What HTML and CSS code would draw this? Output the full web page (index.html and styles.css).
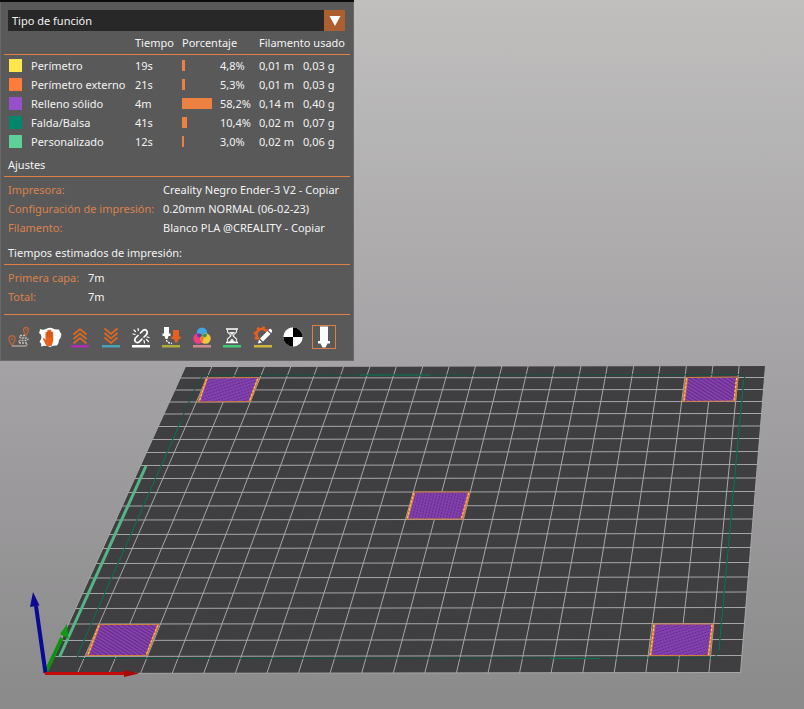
FILE: index.html
```html
<!DOCTYPE html>
<html lang="es">
<head>
<meta charset="utf-8">
<meta name="viewport" content="width=device-width, initial-scale=1">
<title>Vista previa</title>
<link rel="stylesheet" href="styles.css">
</head>
<body>
<main class="viewer">
  <svg class="scene" viewBox="0 0 804 709" preserveAspectRatio="xMinYMin meet" role="img" aria-label="Cama de impresión">
    <defs>
      <pattern id="fill-a" width="4" height="3" patternUnits="userSpaceOnUse" patternTransform="rotate(32)">
        <rect width="4" height="3" fill="#8740b0"/><rect width="4" height="1" fill="#5e2d80"/>
      </pattern>
      <pattern id="fill-b" width="3" height="3" patternUnits="userSpaceOnUse" patternTransform="rotate(-18)">
        <rect width="3" height="3" fill="#8440b0"/><rect width="2" height="1" fill="#5f2f85"/>
      </pattern>
      <pattern id="fill-c" width="3" height="3" patternUnits="userSpaceOnUse" patternTransform="rotate(14)">
        <rect width="3" height="3" fill="#833fae"/><rect width="1" height="2" fill="#5c2d80"/>
      </pattern>
    </defs>
    <path class="bed" d="M185.5 366.5L765.5 365.5L740.5 672.5L46 673.5Z"/>
    <!-- rows -->
    <path class="grid" d="M185.5 366.5L765.5 365.5M180.3 378L764.5 377.5M174.8 390L763.5 389.5M169.4 402L762.6 401.5M163.9 414L761.6 413.5M158.2 426.5L760.6 426M152.3 439.5L759.6 438.5M146.4 452.5L758.5 451.5M140.5 465.5L757.4 464.5M134.6 478.5L756.3 478M128.2 492.5L755.2 491.5M122.1 506L754.1 505.5M115.7 520L753 519M109.1 534.5L751.8 533.5M102.8 548.5L750.7 547.5M96 563.5L749.5 562.5M89.4 578L748.3 577M82.4 593.5L747.1 592M75.5 608.5L745.8 607.5M68.5 624L744.5 623.5M61 640.5L743.2 639.5M53.7 656.5L741.9 655.5M46 673.5L740.5 672.5"/>
    <!-- columns -->
    <path class="grid" d="M185.5 366.5L46 673.5M211.9 366.5L77.6 673M238.2 366.5L109.1 673M264.6 366.5L140.7 673M290.9 366.5L172.3 673M317.3 366.5L203.8 673M343.7 366.5L235.4 673M370 366.5L267 673M396.4 366.5L298.5 673M422.8 366.5L330.1 673M449.1 366.5L361.7 673M475.5 366L393.3 673M501.9 366L424.8 673M528.2 366L456.4 673M554.6 366L488 673M581 366L519.5 673M607.3 366L551.1 673M633.7 366L582.7 673M660 366L614.2 673M686.4 366L645.8 673M712.8 366L677.4 673M739.1 366L708.9 673M765.5 365.5L740.5 672.5"/>
    <path class="skirt" d="M203 375.5L740 374.5L744.5 377L743.5 385L718.5 653L714 658L80 658.500L77 656L197 384Z"/>
    <path class="skirt skirt-bright" d="M181 421L77 656M743.500 380L719 650M360 375L430 375M550 658.500L600 658.500"/>
    <path class="purge" d="M146 466L59.500 657"/>
    <g class="patch">
      <path fill="url(#fill-b)" d="M206 378L259 377.500L250.500 401.500L198 402Z"/>
      <path fill="url(#fill-a)" d="M685.500 377.500L738 377L735.500 401L683 401.500Z"/>
      <path fill="url(#fill-c)" d="M413.500 492L470 492L463 519L406.500 519Z"/>
      <path fill="url(#fill-a)" d="M98.500 624.500L159 624.500L147 655.500L86.500 655.500Z"/>
      <path fill="url(#fill-b)" d="M653.500 624L713.500 624L709.500 655.500L649.500 655.500Z"/>
    </g>
    <path class="patch-edge" d="M207 378.500L199 401.500M258 378.500L249.500 401.500M687 378L684 401M737 378L734.500 401M414.500 492.500L407.500 518.500M469 492.500L462 518.500M99.500 625L88 655M158 625L146.500 655M654.500 624.500L650.500 655M712.500 624.500L708.500 655"/>
    <path class="patch-side" d="M206.500 379L199.500 401M257.500 379L249.500 401M686.500 378.500L684 401M736.500 378L734 400M413.500 493L407.500 518M468.500 493L461.500 518M98.500 625.500L88 655M157.500 625.500L146 655M654 625L650.500 655M712 625L708.500 655"/>
    <path stroke="#119111" stroke-width="4" d="M46 672L62 638"/>
    <path fill="#119a11" d="M67 624L60 634L68.500 639Z"/>
    <path stroke="#0a0a96" stroke-width="4" d="M45.500 673L36 606"/>
    <path fill="#0a0a96" d="M33 592L30 607L39.500 605.500Z"/>
    <path stroke="#c50808" stroke-width="3" d="M45 673.500H125"/>
    <path fill="#a80808" d="M124 670L139 673.500L124 677Z"/>
  </svg>

  <section class="panel" aria-label="Leyenda">
    <div class="picker">
      <select class="picker-select" aria-label="Tipo de vista"><option>Tipo de función</option></select>
      <span class="picker-arrow"><svg width="12" height="10" viewBox="0 0 12 10"><path fill="#fff" d="M.5 0H11.500L6 10Z"/></svg></span>
    </div>

    <table class="features">
      <colgroup><col class="c-swatch"><col class="c-name"><col class="c-time"><col class="c-bar"><col class="c-pct"><col class="c-len"><col></colgroup>
      <thead>
        <tr><th colspan="2"></th><th>Tiempo</th><th colspan="2">Porcentaje</th><th colspan="2">Filamento usado</th></tr>
      </thead>
      <tbody>
        <tr><td><i class="swatch yellow"></i></td><td>Perímetro</td><td>19s</td><td><i class="bar" style="width:3px"></i></td><td>4,8%</td><td>0,01 m</td><td>0,03 g</td></tr>
        <tr><td><i class="swatch orange"></i></td><td>Perímetro externo</td><td>21s</td><td><i class="bar" style="width:3px"></i></td><td>5,3%</td><td>0,01 m</td><td>0,03 g</td></tr>
        <tr><td><i class="swatch purple"></i></td><td>Relleno sólido</td><td>4m</td><td><i class="bar" style="width:30px"></i></td><td>58,2%</td><td>0,14 m</td><td>0,40 g</td></tr>
        <tr><td><i class="swatch teal"></i></td><td>Falda/Balsa</td><td>41s</td><td><i class="bar" style="width:5px"></i></td><td>10,4%</td><td>0,02 m</td><td>0,07 g</td></tr>
        <tr><td><i class="swatch mint"></i></td><td>Personalizado</td><td>12s</td><td><i class="bar" style="width:2px"></i></td><td>3,0%</td><td>0,02 m</td><td>0,06 g</td></tr>
      </tbody>
    </table>

    <h2 class="title">Ajustes</h2>
    <dl class="facts facts-wide">
      <dt>Impresora:</dt><dd>Creality Negro Ender-3 V2 - Copiar</dd>
      <dt>Configuración de impresión:</dt><dd>0.20mm NORMAL (06-02-23)</dd>
      <dt>Filamento:</dt><dd>Blanco PLA @CREALITY - Copiar</dd>
    </dl>

    <h2 class="title title-spaced">Tiempos estimados de impresión:</h2>
    <dl class="facts facts-narrow">
      <dt>Primera capa:</dt><dd>7m</dd>
      <dt>Total:</dt><dd>7m</dd>
    </dl>

    <div class="tools">
      <button class="tool" aria-label="Recorrido"><svg viewBox="0 0 24 24" fill="none">
        <path stroke="#b5663a" stroke-width="1.400" d="M5 20.500C3.500 17.500 2 16 2 13.800a3 3 0 0 1 6 0C8 16 6.500 17.500 5 20.500ZM19 10.500C17.800 8 16.500 6.800 16.500 5a2.500 2.500 0 0 1 5 0C21.500 6.800 20.200 8 19 10.500Z"/>
        <circle cx="5" cy="13.800" r="1" fill="#b5663a"/><circle cx="19" cy="5" r=".8" fill="#b5663a"/>
        <path stroke="#c8c4c0" stroke-width="1.300" stroke-dasharray="2 1" d="M18 10.500H13.500Q11.500 11 13.500 13H20Q22 14 20 15.500H13Q10.500 16.500 13 18H20"/>
        <path stroke="#a8a09a" stroke-width="1.300" d="M5 21H18Q20 21 20 18.500"/></svg></button>
      <button class="tool" aria-label="Limpieza"><svg viewBox="0 0 24 24">
        <path fill="#fff" d="M2 4Q5 5.500 8 4Q11 2 14 3Q17 5 21 4.500Q21.500 7 23.500 9Q23 13 21 15Q21 18 19 20.500Q15 20 12 22Q8 20 3 21.500Q4 18 1.500 17Q3.500 14 3.500 12Q3.500 9 1 8Q2 6 2 4Z"/>
        <path fill="#e8601c" d="M8 20L5 14Q5 12.500 6.500 13.500L7.500 15V7.500Q8.500 6 9.300 7.500V5.500Q10.500 4 11.300 5.500V5Q12.500 4 13.300 5.500V7Q14.500 6 15.200 7.500V16L13.500 21H9Z"/>
        <path stroke="#b44a18" stroke-width=".6" d="M9.400 7V12M11.400 6V12M13.400 7V12"/></svg></button>
      <button class="tool" aria-label="Retracciones"><svg viewBox="0 0 24 24" fill="none">
        <path stroke="#df6a22" stroke-width="1.700" d="M5.500 9.500L12 4L18.500 9.500M5.500 14L12 8.500L18.500 14M5.500 18.500L12 13L18.500 18.500"/><path fill="#a92fb0" d="M3 20H21V22.500H3Z"/></svg></button>
      <button class="tool" aria-label="Desretracciones"><svg viewBox="0 0 24 24" fill="none">
        <path stroke="#df6a22" stroke-width="1.700" d="M5.500 3.500L12 9L18.500 3.500M5.500 8L12 13.500L18.500 8M5.500 12.500L12 18L18.500 12.500"/><path fill="#4aa3b8" d="M3 20H21V22.500H3Z"/></svg></button>
      <button class="tool" aria-label="Costuras"><svg viewBox="0 0 24 24" fill="none" stroke="#fff" stroke-width="1.700" stroke-linecap="round">
        <path d="M11.500 8L14 5.500Q16 4 17.500 5.500T17.500 9.500L15 12M9 10.500L6.500 13Q5 15 6.500 16.700T10.500 16.700L13 14"/><path stroke-width="1.200" d="M9 3.500L9.500 5.500M5 5L6.500 6.500M4 9L6 9.500M15 15.500L15.500 18M17.500 14.500L19.500 16.500M18 12L20 12.500"/><path stroke="none" fill="#fff" d="M3 20H21V22.500H3Z"/></svg></button>
      <button class="tool" aria-label="Cambios de herramienta"><svg viewBox="0 0 24 24" fill="none">
        <path fill="#fff" d="M5 2H10V8.500H11.500V11H9.500L8.500 14H6.500L5.500 11H3.500V8.500H5Z"/><path fill="#e8601c" d="M14 5H20V11.500H21.500V14H19.500L18.500 17.500H16L15 14H12.500V11.500H14Z"/><path stroke="#fff" stroke-width="1.300" stroke-dasharray="2 1" d="M7.500 15Q8 18 13 18.500"/><path fill="#b0ad3d" d="M3 20H21V22.500H3Z"/></svg></button>
      <button class="tool" aria-label="Cambios de color"><svg viewBox="0 0 24 24">
        <circle cx="12" cy="7.800" r="5.200" fill="#42a5e8"/><circle cx="8.500" cy="13.500" r="5.200" fill="#ee3d86"/><circle cx="15.500" cy="13.500" r="5.200" fill="#f2c83a"/>
        <path fill="#5b40a0" d="M7 9Q10 7.500 12 10Q11.500 12.500 8.500 12.500Q6.800 11 7 9Z"/><path fill="#3c9850" d="M17 9Q14 7.500 12 10Q12.500 12.500 15.500 12.500Q17.200 11 17 9Z"/><path fill="#e87830" d="M12 10.500Q15 13.500 12 17.300Q9 13.500 12 10.500Z"/><path fill="#d08a8d" d="M3 20H21V22.500H3Z"/></svg></button>
      <button class="tool" aria-label="Pausas"><svg viewBox="0 0 24 24" fill="none">
        <path stroke="#fff" stroke-width="1.600" d="M6 4H18M6 17.500H18"/><path stroke="#e9e5e2" stroke-width="1.200" d="M7.500 4V7L11 10.700L7.500 14V17M16.500 4V7L13 10.700L16.500 14V17"/><path fill="#eee" d="M9 7H15L12 10ZM9 17L12 13.500L15 17Z"/><path fill="#42c878" d="M3 20H21V22.500H3Z"/></svg></button>
      <button class="tool" aria-label="Código personalizado"><svg viewBox="0 0 24 24" fill="none">
        <circle cx="11" cy="9.500" r="5.600" stroke="#e8601c" stroke-width="2.500"/><circle cx="11" cy="9.500" r="7.300" stroke="#e8601c" stroke-width="2" stroke-dasharray="2.800 2.930"/><path stroke="#59595a" stroke-width="7" d="M9 18L21 6"/><path fill="#fff" d="M7 18.500L8 14.500L11 17.500ZM9 13.500L16.500 6L19.500 9L12 16.500ZM17.300 5.200L18.500 4Q19.500 3.500 20.500 4.500T21 7L20.200 8.100Z"/><path fill="#cdb63c" d="M3 20H21V22.500H3Z"/></svg></button>
      <button class="tool" aria-label="Centro de gravedad"><svg viewBox="0 0 24 24">
        <circle cx="12" cy="12" r="9.700" fill="#fff"/><path d="M12 12V2.300A9.700 9.700 0 0 1 21.700 12ZM12 12V21.700A9.700 9.700 0 0 1 2.300 12Z"/></svg></button>
      <button class="tool tool-active" aria-label="Marcador de herramienta" aria-pressed="true"><svg viewBox="0 0 24 24">
        <path fill="#fff" d="M8 1.500H16V16H18V18.500H15.500L13.500 22.500H10.500L8.500 18.500H6V16H8Z"/></svg></button>
    </div>
  </section>
</main>
</body>
</html>
```
FILE: styles.css
```css
* { box-sizing: border-box; }

body {
  margin: 0;
  font: 11px/19px "Noto Sans", "Open Sans", sans-serif;
  color: #f2f2f2;
}

.viewer {
  display: grid;
  min-height: 100vh;
  align-items: start;
  justify-items: start;
  background: linear-gradient(#c0bfbe, #a5a3a5 50%, #8b8a8b);
}

.scene,
.panel { grid-area: 1 / 1; }

.scene { display: block; width: 100%; height: auto; }
.bed { fill: #3f3e40; }
.grid { fill: none; stroke: #a8a7a8; stroke-width: 1; }
.skirt { fill: none; stroke: #17533f; stroke-width: 1; }
.skirt-bright { stroke: #0c7455; }
.purge { stroke: #55b488; stroke-width: 3; }
.patch { stroke: #d08040; stroke-width: 1; }
.patch-edge { stroke: #d5813f; stroke-width: 2; }
.patch-side { stroke: #ffd080; stroke-width: 1; stroke-dasharray: 2 2; }

.panel {
  position: relative;
  width: 44%;
  min-width: 354px;
  padding: 8px 4px 12px;
  border-top: 2px solid #0c0c0c;
  background: #59595a;
  box-shadow: inset 1px 0 #69696a, inset -1px -1px #69696a;
}

.picker { position: relative; margin: 0 5px 0 4px; }
.picker-select {
  display: block;
  appearance: none;
  width: 100%;
  height: 21px;
  padding: 0 24px 0 4px;
  border: 0;
  border-radius: 0;
  background: #282829;
  color: inherit;
  font: inherit;
}
.picker-arrow {
  position: absolute;
  inset: 0 0 0 auto;
  display: grid;
  place-items: center;
  width: 21px;
  background: #ae5f2f;
  pointer-events: none;
}

.features { width: 100%; table-layout: fixed; border-collapse: separate; border-spacing: 0; }
.features th, .features td { padding: 0; text-align: left; font-weight: 400; white-space: nowrap; }
.features th { height: 24px; border-bottom: 1px solid #e08048; }
.features tbody::before { content: ""; display: block; height: 1px; }
.features td { height: 19px; }
.c-swatch { width: 27px; }
.c-name { width: 104px; }
.c-time { width: 47px; }
.c-bar { width: 38px; }
.c-pct { width: 39px; }
.c-len { width: 44px; }

.swatch { display: block; width: 13px; height: 13px; margin-left: 5px; }
.yellow { background: #ffe64d; }
.orange { background: #ff7d38; }
.purple { background: #9650cc; }
.teal { background: #00876c; }
.mint { background: #5ed196; }
.bar { display: block; height: 11px; background: #ed8141; }

.title {
  margin: 4px 0 0;
  padding: 0 4px 2px;
  border-bottom: 1px solid #e08048;
  font-size: 11px;
  font-weight: 400;
}
.title-spaced { margin-top: 6px; }

.facts { display: grid; margin: 0; padding: 3px 4px 0; }
.facts-wide { grid-template-columns: 155px 1fr; }
.facts-narrow { grid-template-columns: 80px 1fr; }
.facts dt { color: #d9824c; white-space: nowrap; }
.facts dd { margin: 0; white-space: nowrap; }

.tools {
  display: grid;
  grid-template-columns: repeat(11, 1fr);
  margin-top: 8px;
  padding: 10px 11px 0 0;
  border-top: 1px solid #e08048;
  justify-items: center;
}
.tool { display: block; width: 24px; height: 24px; padding: 0; border: 0; background: none; }
.tool svg { display: block; width: 100%; height: 100%; }
.tool-active { outline: 1px solid #d97f48; outline-offset: -1px; }
```
